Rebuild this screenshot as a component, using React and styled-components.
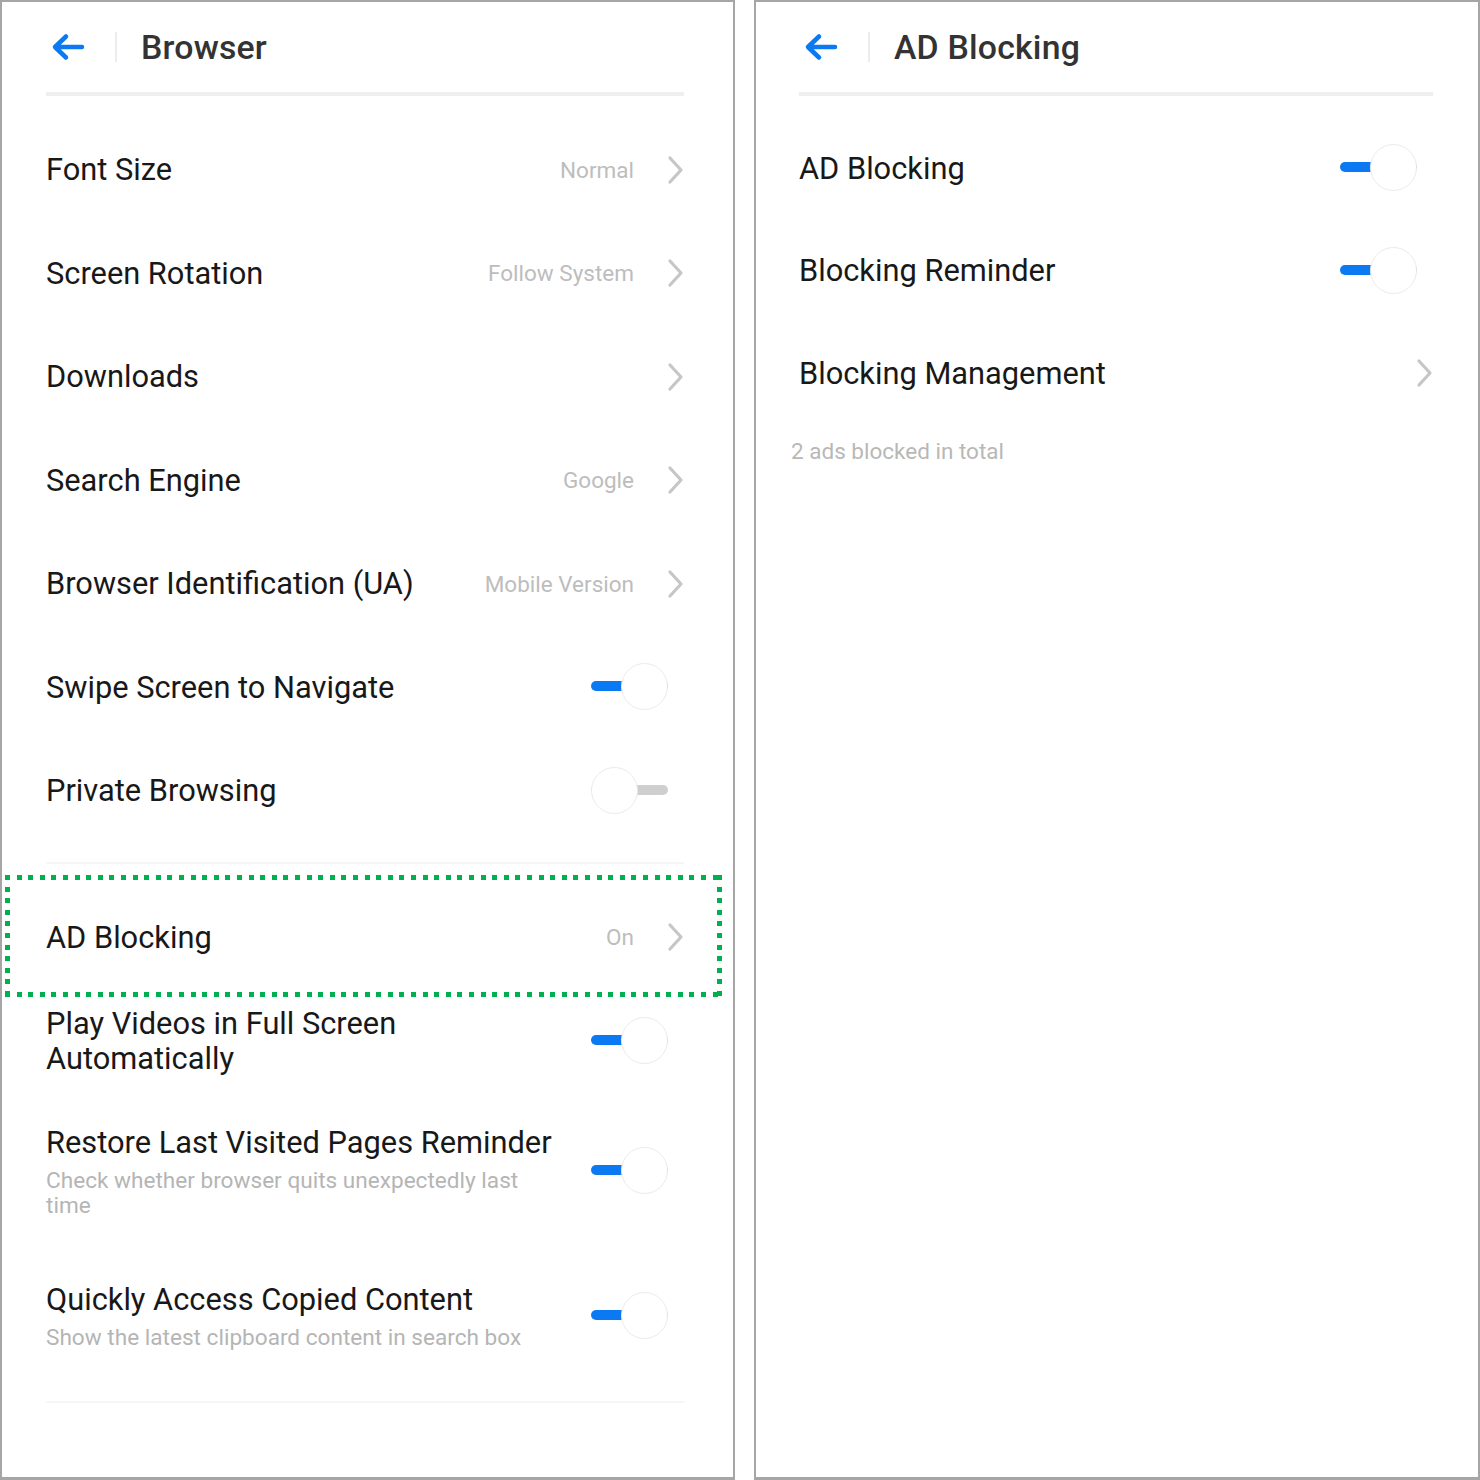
import React from "react";
import styled, { createGlobalStyle } from "styled-components";

const GlobalStyle = createGlobalStyle`
  html, body {
    margin: 0;
    padding: 0;
    background: #ffffff;
  }
  body {
    font-family: Roboto, "Noto Sans", "Liberation Sans", sans-serif;
    -webkit-font-smoothing: antialiased;
  }
`;

const BLUE = "#0b7af2";

const Page = styled.div`
  display: flex;
  gap: 19px;
  width: 1480px;
  height: 1480px;
  box-sizing: border-box;
`;

const Screen = styled.div`
  position: relative;
  width: ${(p) => p.width}px;
  height: 1480px;
  box-sizing: border-box;
  border: 2px solid #a6a6a6;
  border-bottom-width: 3px;
  padding: 0 ${(p) => p.padRight}px 0 ${(p) => p.padLeft}px;
  background: #ffffff;
  overflow: hidden;
`;

const Header = styled.div`
  display: flex;
  align-items: center;
  height: 90px;
  border-bottom: 4px solid #efefef;
`;

const BackButton = styled.div`
  display: flex;
  align-items: center;
  justify-content: center;
  width: 46px;
  height: 40px;
  margin-left: -1px;
  color: ${BLUE};
`;

const HeaderSep = styled.div`
  width: 2px;
  height: 30px;
  background: #ececec;
  margin: 0 24px 0 24px;
`;

const Title = styled.h1`
  margin: 0;
  font-size: 33.8px;
  font-weight: 500;
  color: #333333;
  letter-spacing: 0.2px;
`;

const List = styled.div`
  display: flex;
  flex-direction: column;
  padding-top: ${(p) => p.padTop}px;
`;

const Group = styled.div`
  display: flex;
  flex-direction: column;
  padding-bottom: 19px;
  border-bottom: 2px solid #f6f6f6;
  margin-bottom: ${(p) => p.gapAfter || 0}px;
`;

const Row = styled.div`
  position: relative;
  display: flex;
  align-items: center;
  min-height: ${(p) => p.h || 103.5}px;
  padding: ${(p) => (p.tall ? "32px 0" : "0")};
  box-sizing: border-box;
`;

const TextCol = styled.div`
  display: flex;
  flex-direction: column;
  flex: 1;
  min-width: 0;
  padding-right: 24px;
`;

const Label = styled.div`
  font-size: 30.8px;
  line-height: 35px;
  color: #181818;
`;

const Sub = styled.div`
  margin-top: 8px;
  font-size: 22.6px;
  line-height: 25px;
  color: #b5b5b5;
`;

const Value = styled.div`
  font-size: 22.5px;
  color: #bdbdbd;
  margin-right: 33px;
  white-space: nowrap;
`;

const Chevron = styled.svg`
  width: 17px;
  height: 30px;
  flex: none;
`;

const ToggleBox = styled.div`
  position: relative;
  flex: none;
  width: 77px;
  height: 48px;
  margin-right: 16px;
`;

const Track = styled.div`
  position: absolute;
  left: 0;
  right: 0;
  top: 50%;
  height: 10px;
  margin-top: -6px;
  border-radius: 5px;
  background: ${(p) => (p.on ? BLUE : "#cfcfcf")};
`;

const Thumb = styled.div`
  position: absolute;
  top: 0;
  ${(p) => (p.on ? "right: 0;" : "left: 0;")}
  width: 47px;
  height: 47px;
  box-sizing: border-box;
  border-radius: 50%;
  background: #ffffff;
  border: 1.5px solid #ebebeb;
`;

const Highlight = styled.div`
  position: absolute;
  left: -41px;
  right: -38px;
  top: -11px;
  bottom: -8px;
  pointer-events: none;
  background:
    repeating-linear-gradient(90deg, #00b050 0 5px, transparent 5px 11.6px) top left / 100% 5px no-repeat,
    repeating-linear-gradient(90deg, #00b050 0 5px, transparent 5px 11.6px) bottom left / 100% 5px no-repeat,
    repeating-linear-gradient(180deg, #00b050 0 5px, transparent 5px 11.6px) top left / 5px 100% no-repeat,
    repeating-linear-gradient(180deg, #00b050 0 5px, transparent 5px 11.6px) top right / 5px 100% no-repeat;
`;

const Note = styled.div`
  margin: 14px 0 0 -8px;
  font-size: 22.5px;
  line-height: 25px;
  color: #b8b8b8;
`;

function BackArrow() {
  return (
    <BackButton>
      <svg width="34" height="28" viewBox="0 0 34 28" fill="none">
        <path
          d="M31 14H5M15 3.5L4 14l11 10.5"
          stroke="currentColor"
          strokeWidth="4.5"
          strokeLinecap="round"
          strokeLinejoin="round"
        />
      </svg>
    </BackButton>
  );
}

function Arrow() {
  return (
    <Chevron viewBox="0 0 17 30" fill="none">
      <path
        d="M3 3l11 12-11 12"
        stroke="#c6c6c6"
        strokeWidth="3.2"
        strokeLinecap="round"
        strokeLinejoin="round"
      />
    </Chevron>
  );
}

function Toggle({ on }) {
  return (
    <ToggleBox>
      <Track on={on} />
      <Thumb on={on} />
    </ToggleBox>
  );
}

function Item({ label, sub, value, chevron, toggle, tall, h, children }) {
  return (
    <Row tall={tall} h={h}>
      <TextCol>
        <Label>{label}</Label>
        {sub && <Sub>{sub}</Sub>}
      </TextCol>
      {value && <Value>{value}</Value>}
      {chevron && <Arrow />}
      {toggle !== undefined && <Toggle on={toggle} />}
      {children}
    </Row>
  );
}

function BrowserScreen() {
  return (
    <Screen width={735} padLeft={44} padRight={49}>
      <Header>
        <BackArrow />
        <HeaderSep />
        <Title>Browser</Title>
      </Header>
      <List padTop={22}>
        <Group gapAfter={22}>
          <Item label="Font Size" value="Normal" chevron />
          <Item label="Screen Rotation" value="Follow System" chevron />
          <Item label="Downloads" chevron />
          <Item label="Search Engine" value="Google" chevron />
          <Item label="Browser Identification (UA)" value="Mobile Version" chevron />
          <Item label="Swipe Screen to Navigate" toggle={true} />
          <Item label="Private Browsing" toggle={false} />
        </Group>
        <Group>
          <Item label="AD Blocking" value="On" chevron>
            <Highlight />
          </Item>
          <Item
            label={
              <>
                Play Videos in Full Screen
                <br />
                Automatically
              </>
            }
            toggle={true}
          />
          <Item
            tall
            h={0}
            label="Restore Last Visited Pages Reminder"
            sub="Check whether browser quits unexpectedly last time"
            toggle={true}
          />
          <Item
            tall
            h={0}
            label="Quickly Access Copied Content"
            sub="Show the latest clipboard content in search box"
            toggle={true}
          />
        </Group>
      </List>
    </Screen>
  );
}

function AdBlockScreen() {
  return (
    <Screen width={726} padLeft={43} padRight={45}>
      <Header>
        <BackArrow />
        <HeaderSep />
        <Title>AD Blocking</Title>
      </Header>
      <List padTop={21}>
        <Item label="AD Blocking" toggle={true} h={102.5} />
        <Item label="Blocking Reminder" toggle={true} h={102.5} />
        <Item label="Blocking Management" chevron h={102.5} />
        <Note>2 ads blocked in total</Note>
      </List>
    </Screen>
  );
}

export default function App() {
  return (
    <>
      <GlobalStyle />
      <Page>
        <BrowserScreen />
        <AdBlockScreen />
      </Page>
    </>
  );
}
